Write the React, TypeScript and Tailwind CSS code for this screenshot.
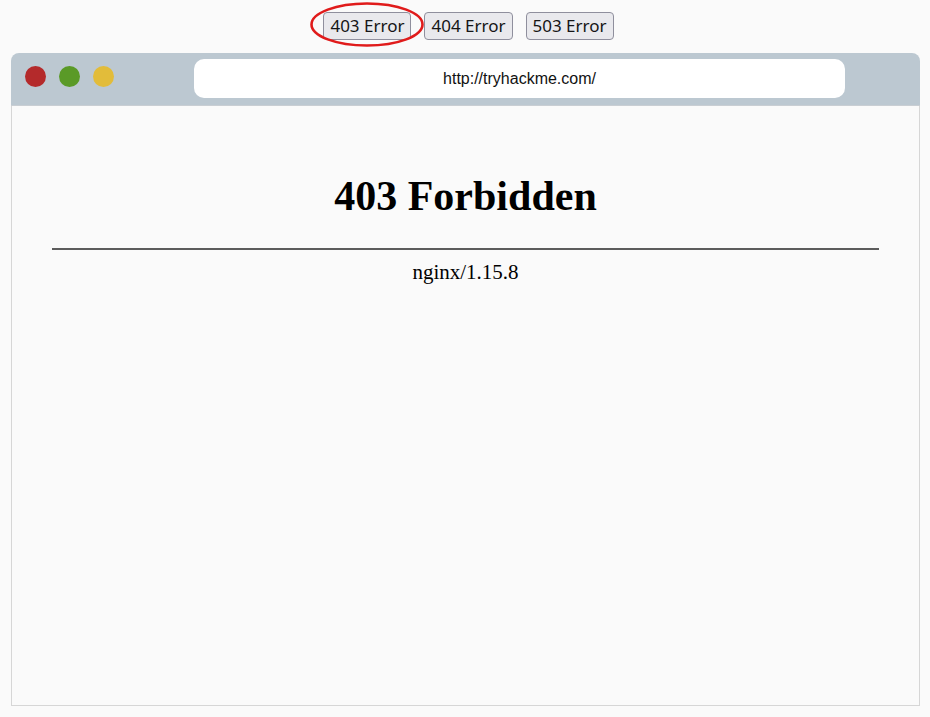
import React from 'react';

const errors = ['403 Error', '404 Error', '503 Error'];

export default function App() {
  return (
    <div className="min-h-screen bg-[#fafafa] pb-[12px]">
      {/* Error switcher */}
      <div className="flex justify-center gap-[13px] pt-[12px] pl-[7px]">
        {errors.map((label, i) => (
          <div key={label} className="relative">
            <button
              className="h-[28px] rounded-[4px] border border-[#8f8f9d] bg-[#e9e9ed] px-[6px] pb-[2px] text-[17px] leading-none text-[#151515]"
              style={{ fontFamily: '"Noto Sans", sans-serif' }}
            >
              {label}
            </button>
            {i === 0 && (
              <svg
                className="pointer-events-none absolute left-[-13px] top-[-10px]"
                width="114"
                height="46"
                viewBox="0 0 114 46"
              >
                <ellipse cx="57" cy="22.5" rx="55.5" ry="21" fill="none" stroke="#e01b1b" strokeWidth="2.6" />
              </svg>
            )}
          </div>
        ))}
      </div>

      {/* Browser window */}
      <div className="ml-[11px] mr-[10px] mt-[13px] flex h-[653px] flex-col">
        <div className="flex h-[53px] items-start rounded-t-[8px] border-b border-[#c9ced3] bg-[#bcc8d1] pl-[14px] pr-[75px]">
          <div className="mt-[13px] flex items-center gap-[13px]">
            <span className="h-[21px] w-[21px] rounded-full bg-[#b42a2b]" />
            <span className="h-[21px] w-[21px] rounded-full bg-[#5a9a27]" />
            <span className="h-[21px] w-[21px] rounded-full bg-[#e2bc3a]" />
          </div>
          <div
            className="ml-[80px] mt-[6px] flex h-[39px] flex-1 items-center justify-center rounded-[10px] bg-white text-[16px] text-[#111]"
            style={{ fontFamily: '"Liberation Sans", Arial, sans-serif' }}
          >
            http://tryhackme.com/
          </div>
        </div>

        <div
          className="flex-1 border-x border-b border-[#d6d6d6] bg-[#fafafa] px-[40px] pt-[66px] text-center text-black"
          style={{ fontFamily: '"Liberation Serif", "Times New Roman", serif' }}
        >
          <h1 className="text-[42px] font-bold leading-[48px]">403 Forbidden</h1>
          <hr className="mt-[28px] border-t-2 border-[#5c5c5c]" />
          <p className="mt-[10px] text-[21px] leading-[24px]">nginx/1.15.8</p>
        </div>
      </div>
    </div>
  );
}
